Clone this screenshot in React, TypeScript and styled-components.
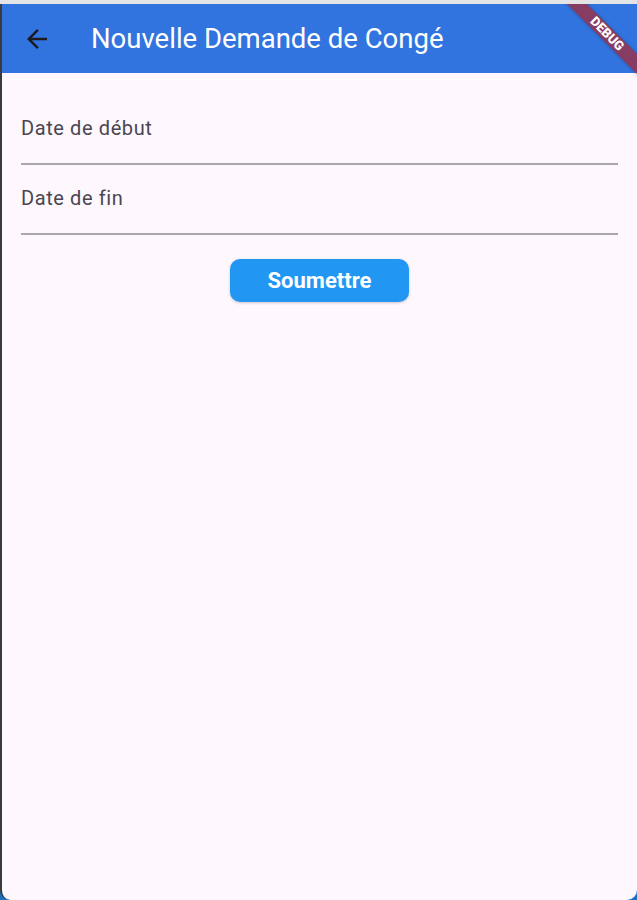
import React from "react";
import styled, { createGlobalStyle } from "styled-components";

const GlobalStyle = createGlobalStyle`
  html, body {
    margin: 0;
    padding: 0;
    background: #1b6fbf;
  }
  body {
    font-family: Roboto, "Noto Sans", "Liberation Sans", sans-serif;
  }
  * { box-sizing: border-box; }
`;

const Page = styled.div`
  width: 637px;
  height: 900px;
  display: flex;
  flex-direction: column;
  background: #1b6fbf;
`;

const TopStrip = styled.div`
  height: 4px;
  flex: 0 0 4px;
  background: #e4e4e6;
`;

const Window = styled.div`
  flex: 1;
  position: relative;
  display: flex;
  flex-direction: column;
  background: #fef8fe;
  border-left: 2px solid #3a3b3f;
  border-radius: 0 0 10px 10px;
  overflow: hidden;
`;

const AppBar = styled.header`
  height: 69px;
  flex: 0 0 69px;
  display: flex;
  align-items: center;
  background: #3274df;
`;

const BackButton = styled.button`
  width: 70px;
  height: 69px;
  flex: 0 0 70px;
  display: flex;
  align-items: center;
  justify-content: center;
  background: transparent;
  border: none;
  padding: 0;
  margin: 0;
  color: #1d1b20;
  cursor: pointer;
`;

const Title = styled.h1`
  margin: 0 0 0 19px;
  font-family: Roboto, "Noto Sans", sans-serif;
  font-size: 27.5px;
  font-weight: 400;
  color: #ffffff;
  line-height: 1;
  white-space: nowrap;
`;

const Content = styled.main`
  display: flex;
  flex-direction: column;
  padding: 22px 19px 0 19px;
`;

const Field = styled.div`
  height: 70px;
  display: flex;
  align-items: center;
  border-bottom: 2px solid #aba6ae;
`;

const FieldLabel = styled.span`
  font-family: Roboto, "Noto Sans", sans-serif;
  font-size: 20px;
  letter-spacing: 0.6px;
  color: #4a4650;
  margin-top: -2px;
`;

const ButtonRow = styled.div`
  display: flex;
  justify-content: center;
  padding-top: 24px;
`;

const SubmitButton = styled.button`
  width: 179px;
  height: 43px;
  border: none;
  border-radius: 10px;
  background: #2196f3;
  color: #ffffff;
  font-family: Roboto, "Noto Sans", sans-serif;
  font-weight: 700;
  font-size: 22px;
  letter-spacing: 0;
  box-shadow: 0 1px 3px rgba(0, 0, 0, 0.2);
  cursor: pointer;
`;

const Banner = styled.div`
  position: absolute;
  top: 0;
  right: 0;
  width: 100px;
  height: 100px;
  overflow: hidden;
  pointer-events: none;
`;

const Ribbon = styled.div`
  position: absolute;
  left: -10px;
  top: 23px;
  width: 160px;
  height: 14px;
  transform: rotate(45deg);
  background: rgba(183, 28, 28, 0.64);
  box-shadow: 0 0 4px rgba(0, 0, 0, 0.25);
  color: #ffffff;
  font-family: Roboto, "Noto Sans", sans-serif;
  font-weight: 900;
  font-size: 13px;
  line-height: 14px;
  text-align: center;
`;

const BackIcon = () => (
  <svg width="30" height="30" viewBox="0 0 24 24" aria-hidden="true">
    <path
      fill="currentColor"
      d="M20 11H7.83l5.59-5.59L12 4l-8 8 8 8 1.41-1.41L7.83 13H20v-2z"
    />
  </svg>
);

export default function App() {
  return (
    <>
      <GlobalStyle />
      <Page>
        <TopStrip />
        <Window>
          <AppBar>
            <BackButton aria-label="Retour">
              <BackIcon />
            </BackButton>
            <Title>Nouvelle Demande de Congé</Title>
          </AppBar>
          <Content>
            <Field>
              <FieldLabel>Date de début</FieldLabel>
            </Field>
            <Field>
              <FieldLabel>Date de fin</FieldLabel>
            </Field>
            <ButtonRow>
              <SubmitButton>Soumettre</SubmitButton>
            </ButtonRow>
          </Content>
          <Banner>
            <Ribbon>DEBUG</Ribbon>
          </Banner>
        </Window>
      </Page>
    </>
  );
}
